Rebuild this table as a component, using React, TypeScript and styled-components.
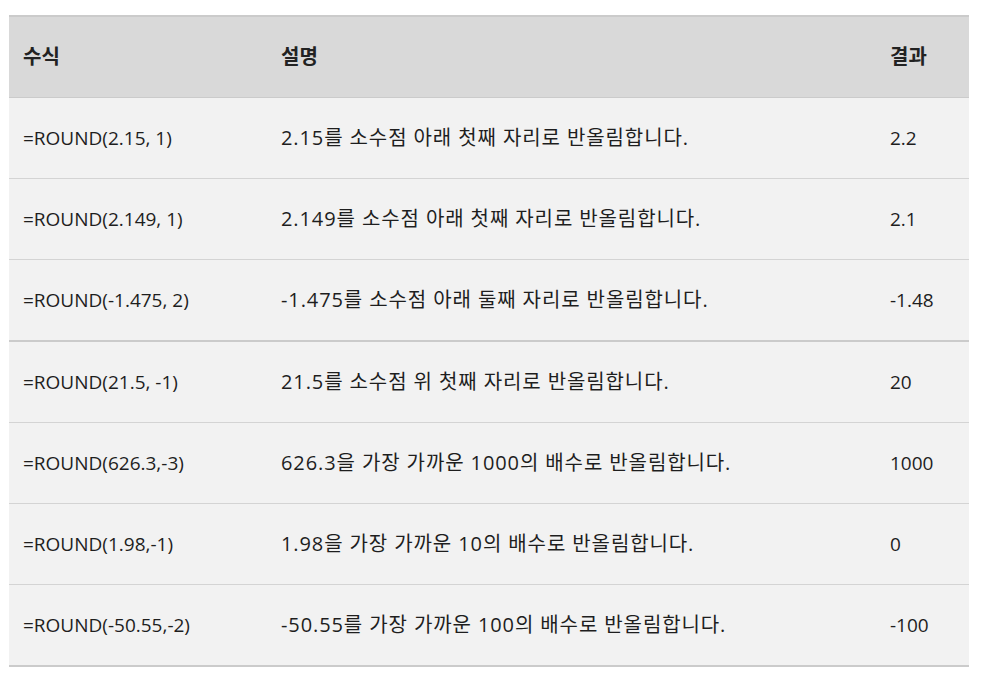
import React from "react";
import styled, { createGlobalStyle } from "styled-components";

const GlobalStyle = createGlobalStyle`
  body {
    margin: 0;
    background: #ffffff;
    font-family: "Segoe UI", "Open Sans", "Noto Sans CJK KR", sans-serif;
    color: #1e1e1e;
  }
`;

const Page = styled.div`
  padding: 15px 15px 0 9px;
`;

const Table = styled.table`
  width: 960px;
  border-collapse: collapse;
  table-layout: fixed;
  font-size: 19px;
  line-height: 26px;
`;

const HeadRow = styled.tr`
  background: #d9d9d9;
  border-top: 2px solid #cbcbcb;
  border-bottom: 1px solid #cbcbcb;
`;

const HeadCell = styled.th<{ $w: number }>`
  width: ${(p) => p.$w - 28}px;
  height: 80px;
  padding: 0 14px;
  text-align: left;
  font-weight: 700;
  font-size: 20px;
  color: #222;
`;

const Body = styled.tbody`
  border-bottom: 2px solid #cbcbcb;
`;

const Row = styled.tr`
  background: #f2f2f2;
  border-bottom: 1px solid #d4d4d4;
`;

const Cell = styled.td<{ $desc?: boolean }>`
  height: 80px;
  padding: 0 14px;
  vertical-align: middle;
  white-space: nowrap;
  font-size: ${(p) => (p.$desc ? 20 : 19)}px;
  letter-spacing: ${(p) => (p.$desc ? 0.9 : 0)}px;
`;

type Item = { formula: string; desc: string; result: string };

const first: Item[] = [
  { formula: "=ROUND(2.15, 1)", desc: "2.15를 소수점 아래 첫째 자리로 반올림합니다.", result: "2.2" },
  { formula: "=ROUND(2.149, 1)", desc: "2.149를 소수점 아래 첫째 자리로 반올림합니다.", result: "2.1" },
  { formula: "=ROUND(-1.475, 2)", desc: "-1.475를 소수점 아래 둘째 자리로 반올림합니다.", result: "-1.48" },
];

const second: Item[] = [
  { formula: "=ROUND(21.5, -1)", desc: "21.5를 소수점 위 첫째 자리로 반올림합니다.", result: "20" },
  { formula: "=ROUND(626.3,-3)", desc: "626.3을 가장 가까운 1000의 배수로 반올림합니다.", result: "1000" },
  { formula: "=ROUND(1.98,-1)", desc: "1.98을 가장 가까운 10의 배수로 반올림합니다.", result: "0" },
  { formula: "=ROUND(-50.55,-2)", desc: "-50.55를 가장 가까운 100의 배수로 반올림합니다.", result: "-100" },
];

function Rows({ items }: { items: Item[] }) {
  return (
    <Body>
      {items.map((it) => (
        <Row key={it.formula}>
          <Cell>{it.formula}</Cell>
          <Cell $desc>{it.desc}</Cell>
          <Cell>{it.result}</Cell>
        </Row>
      ))}
    </Body>
  );
}

export default function App() {
  return (
    <Page>
      <GlobalStyle />
      <Table>
        <thead>
          <HeadRow>
            <HeadCell $w={258}>수식</HeadCell>
            <HeadCell $w={609}>설명</HeadCell>
            <HeadCell $w={93}>결과</HeadCell>
          </HeadRow>
        </thead>
        <Rows items={first} />
        <Rows items={second} />
      </Table>
    </Page>
  );
}
